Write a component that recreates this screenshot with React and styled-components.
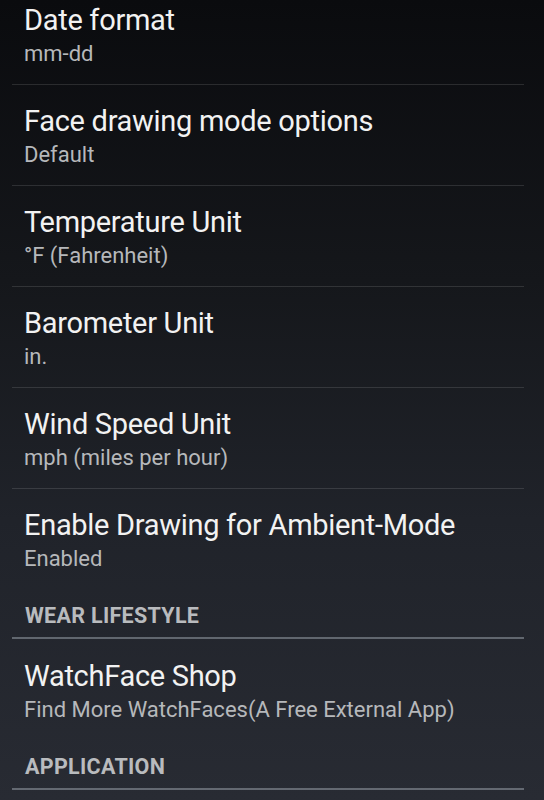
import React from "react";
import styled, { createGlobalStyle } from "styled-components";

const GlobalStyle = createGlobalStyle`
  html, body {
    margin: 0;
    padding: 0;
    background: #0a0b0e;
  }
  body {
    font-family: Roboto, "Noto Sans", "Liberation Sans", sans-serif;
  }
`;

const Screen = styled.div`
  width: 544px;
  height: 800px;
  overflow: hidden;
  background: linear-gradient(180deg, #0a0b0e 0%, #15171b 35%, #20232a 65%, #282b33 100%);
`;

// list is scrolled a little, so the first row is partly cut off at the top
const List = styled.div`
  margin: -16px 20px 0 12px;
  display: flex;
  flex-direction: column;
`;

const Row = styled.div`
  box-sizing: border-box;
  height: ${(p) => (p.$divider ? "101px" : "100px")};
  padding: 19px 12px 0 12px;
  border-bottom: ${(p) => (p.$divider ? "1px solid rgba(255, 255, 255, 0.12)" : "none")};
  display: flex;
  flex-direction: column;
`;

const Title = styled.div`
  font-size: 29px;
  line-height: 34px;
  letter-spacing: -0.3px;
  color: #f2f2f2;
  white-space: nowrap;
`;

const Summary = styled.div`
  margin-top: 3px;
  font-size: 22px;
  line-height: 28px;
  color: #b6b8bb;
  white-space: nowrap;
`;

const Section = styled.div`
  box-sizing: border-box;
  padding: 15px 12px 9px 13px;
  border-bottom: 2px solid rgba(150, 156, 166, 0.55);
  margin-bottom: 1px;
  font-size: 21.5px;
  line-height: 24px;
  letter-spacing: 0.3px;
  font-weight: 700;
  text-transform: uppercase;
  color: #b9bbbe;
`;

const items = [
  { title: "Date format", summary: "mm-dd" },
  { title: "Face drawing mode options", summary: "Default" },
  { title: "Temperature Unit", summary: "°F (Fahrenheit)" },
  { title: "Barometer Unit", summary: "in." },
  { title: "Wind Speed Unit", summary: "mph (miles per hour)" },
  { title: "Enable Drawing for Ambient-Mode", summary: "Enabled" },
];

function Pref({ title, summary, divider }) {
  return (
    <Row $divider={divider}>
      <Title>{title}</Title>
      <Summary>{summary}</Summary>
    </Row>
  );
}

export default function App() {
  return (
    <>
      <GlobalStyle />
      <Screen>
        <List>
          {items.map((it, i) => (
            <Pref key={it.title} {...it} divider={i < items.length - 1} />
          ))}
          <Section>Wear Lifestyle</Section>
          <Pref title="WatchFace Shop" summary="Find More WatchFaces(A Free External App)" />
          <Section>Application</Section>
        </List>
      </Screen>
    </>
  );
}
